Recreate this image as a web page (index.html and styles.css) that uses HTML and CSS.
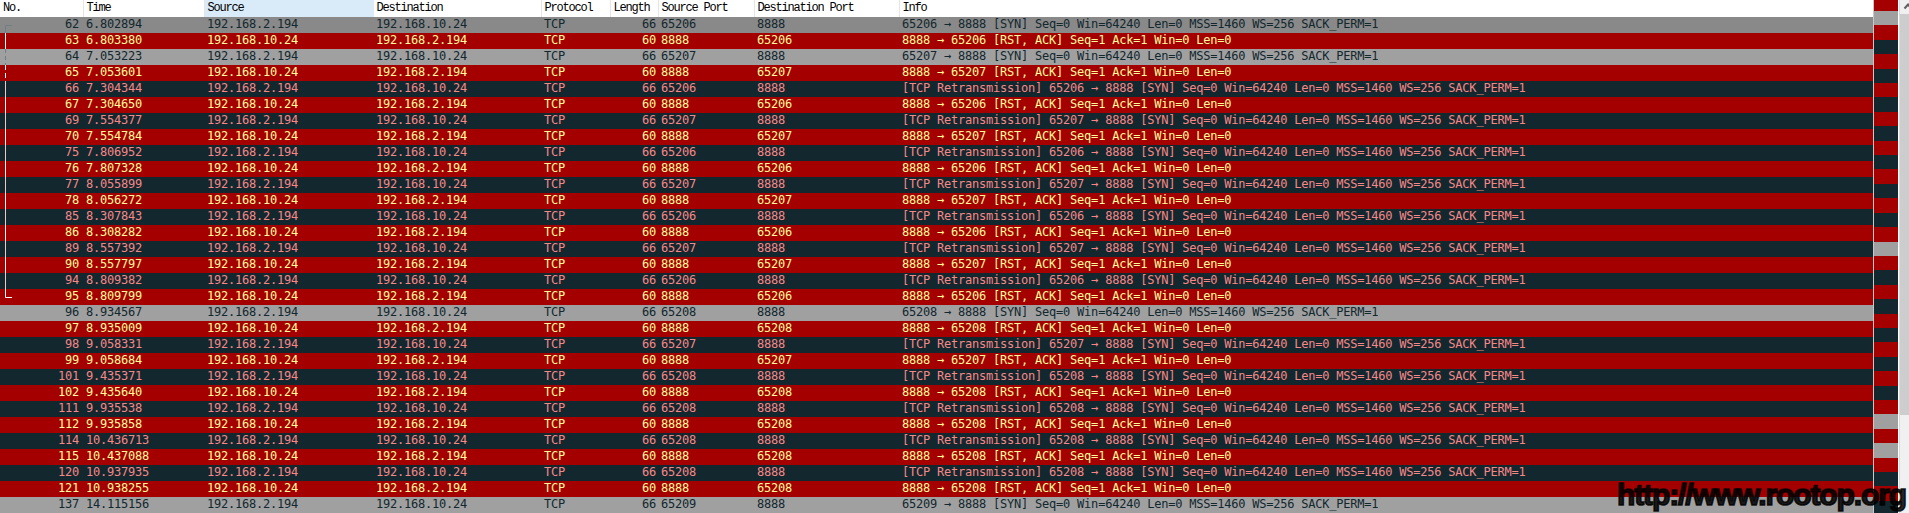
FILE: index.html
```html
<!DOCTYPE html>
<html lang="en">
<head>
<meta charset="utf-8">
<title>Packet list</title>
<link rel="stylesheet" href="styles.css">
</head>
<body>
<main class="window">
  <section class="list">
    <table class="packets">
      <colgroup>
        <col class="c-no"><col class="c-time"><col class="c-src"><col class="c-dst"><col class="c-proto"><col class="c-len"><col class="c-sport"><col class="c-dport"><col class="c-info">
      </colgroup>
      <thead>
        <tr>
          <th>No.</th><th>Time</th><th class="hover">Source</th><th>Destination</th><th>Protocol</th><th>Length</th><th>Source Port</th><th>Destination Port</th><th>Info</th>
        </tr>
      </thead>
      <tbody>
        <tr class="syn first"><td class="num">62</td><td>6.802894</td><td>192.168.2.194</td><td>192.168.10.24</td><td>TCP</td><td class="num">66</td><td>65206</td><td>8888</td><td>65206 → 8888 [SYN] Seq=0 Win=64240 Len=0 MSS=1460 WS=256 SACK_PERM=1</td></tr>
        <tr class="rst"><td class="num">63</td><td>6.803380</td><td>192.168.10.24</td><td>192.168.2.194</td><td>TCP</td><td class="num">60</td><td>8888</td><td>65206</td><td>8888 → 65206 [RST, ACK] Seq=1 Ack=1 Win=0 Len=0</td></tr>
        <tr class="syn"><td class="num">64</td><td>7.053223</td><td>192.168.2.194</td><td>192.168.10.24</td><td>TCP</td><td class="num">66</td><td>65207</td><td>8888</td><td>65207 → 8888 [SYN] Seq=0 Win=64240 Len=0 MSS=1460 WS=256 SACK_PERM=1</td></tr>
        <tr class="rst"><td class="num">65</td><td>7.053601</td><td>192.168.10.24</td><td>192.168.2.194</td><td>TCP</td><td class="num">60</td><td>8888</td><td>65207</td><td>8888 → 65207 [RST, ACK] Seq=1 Ack=1 Win=0 Len=0</td></tr>
        <tr class="bad"><td class="num">66</td><td>7.304344</td><td>192.168.2.194</td><td>192.168.10.24</td><td>TCP</td><td class="num">66</td><td>65206</td><td>8888</td><td>[TCP Retransmission] 65206 → 8888 [SYN] Seq=0 Win=64240 Len=0 MSS=1460 WS=256 SACK_PERM=1</td></tr>
        <tr class="rst"><td class="num">67</td><td>7.304650</td><td>192.168.10.24</td><td>192.168.2.194</td><td>TCP</td><td class="num">60</td><td>8888</td><td>65206</td><td>8888 → 65206 [RST, ACK] Seq=1 Ack=1 Win=0 Len=0</td></tr>
        <tr class="bad"><td class="num">69</td><td>7.554377</td><td>192.168.2.194</td><td>192.168.10.24</td><td>TCP</td><td class="num">66</td><td>65207</td><td>8888</td><td>[TCP Retransmission] 65207 → 8888 [SYN] Seq=0 Win=64240 Len=0 MSS=1460 WS=256 SACK_PERM=1</td></tr>
        <tr class="rst"><td class="num">70</td><td>7.554784</td><td>192.168.10.24</td><td>192.168.2.194</td><td>TCP</td><td class="num">60</td><td>8888</td><td>65207</td><td>8888 → 65207 [RST, ACK] Seq=1 Ack=1 Win=0 Len=0</td></tr>
        <tr class="bad"><td class="num">75</td><td>7.806952</td><td>192.168.2.194</td><td>192.168.10.24</td><td>TCP</td><td class="num">66</td><td>65206</td><td>8888</td><td>[TCP Retransmission] 65206 → 8888 [SYN] Seq=0 Win=64240 Len=0 MSS=1460 WS=256 SACK_PERM=1</td></tr>
        <tr class="rst"><td class="num">76</td><td>7.807328</td><td>192.168.10.24</td><td>192.168.2.194</td><td>TCP</td><td class="num">60</td><td>8888</td><td>65206</td><td>8888 → 65206 [RST, ACK] Seq=1 Ack=1 Win=0 Len=0</td></tr>
        <tr class="bad"><td class="num">77</td><td>8.055899</td><td>192.168.2.194</td><td>192.168.10.24</td><td>TCP</td><td class="num">66</td><td>65207</td><td>8888</td><td>[TCP Retransmission] 65207 → 8888 [SYN] Seq=0 Win=64240 Len=0 MSS=1460 WS=256 SACK_PERM=1</td></tr>
        <tr class="rst"><td class="num">78</td><td>8.056272</td><td>192.168.10.24</td><td>192.168.2.194</td><td>TCP</td><td class="num">60</td><td>8888</td><td>65207</td><td>8888 → 65207 [RST, ACK] Seq=1 Ack=1 Win=0 Len=0</td></tr>
        <tr class="bad"><td class="num">85</td><td>8.307843</td><td>192.168.2.194</td><td>192.168.10.24</td><td>TCP</td><td class="num">66</td><td>65206</td><td>8888</td><td>[TCP Retransmission] 65206 → 8888 [SYN] Seq=0 Win=64240 Len=0 MSS=1460 WS=256 SACK_PERM=1</td></tr>
        <tr class="rst"><td class="num">86</td><td>8.308282</td><td>192.168.10.24</td><td>192.168.2.194</td><td>TCP</td><td class="num">60</td><td>8888</td><td>65206</td><td>8888 → 65206 [RST, ACK] Seq=1 Ack=1 Win=0 Len=0</td></tr>
        <tr class="bad"><td class="num">89</td><td>8.557392</td><td>192.168.2.194</td><td>192.168.10.24</td><td>TCP</td><td class="num">66</td><td>65207</td><td>8888</td><td>[TCP Retransmission] 65207 → 8888 [SYN] Seq=0 Win=64240 Len=0 MSS=1460 WS=256 SACK_PERM=1</td></tr>
        <tr class="rst"><td class="num">90</td><td>8.557797</td><td>192.168.10.24</td><td>192.168.2.194</td><td>TCP</td><td class="num">60</td><td>8888</td><td>65207</td><td>8888 → 65207 [RST, ACK] Seq=1 Ack=1 Win=0 Len=0</td></tr>
        <tr class="bad"><td class="num">94</td><td>8.809382</td><td>192.168.2.194</td><td>192.168.10.24</td><td>TCP</td><td class="num">66</td><td>65206</td><td>8888</td><td>[TCP Retransmission] 65206 → 8888 [SYN] Seq=0 Win=64240 Len=0 MSS=1460 WS=256 SACK_PERM=1</td></tr>
        <tr class="rst"><td class="num">95</td><td>8.809799</td><td>192.168.10.24</td><td>192.168.2.194</td><td>TCP</td><td class="num">60</td><td>8888</td><td>65206</td><td>8888 → 65206 [RST, ACK] Seq=1 Ack=1 Win=0 Len=0</td></tr>
        <tr class="syn"><td class="num">96</td><td>8.934567</td><td>192.168.2.194</td><td>192.168.10.24</td><td>TCP</td><td class="num">66</td><td>65208</td><td>8888</td><td>65208 → 8888 [SYN] Seq=0 Win=64240 Len=0 MSS=1460 WS=256 SACK_PERM=1</td></tr>
        <tr class="rst"><td class="num">97</td><td>8.935009</td><td>192.168.10.24</td><td>192.168.2.194</td><td>TCP</td><td class="num">60</td><td>8888</td><td>65208</td><td>8888 → 65208 [RST, ACK] Seq=1 Ack=1 Win=0 Len=0</td></tr>
        <tr class="bad"><td class="num">98</td><td>9.058331</td><td>192.168.2.194</td><td>192.168.10.24</td><td>TCP</td><td class="num">66</td><td>65207</td><td>8888</td><td>[TCP Retransmission] 65207 → 8888 [SYN] Seq=0 Win=64240 Len=0 MSS=1460 WS=256 SACK_PERM=1</td></tr>
        <tr class="rst"><td class="num">99</td><td>9.058684</td><td>192.168.10.24</td><td>192.168.2.194</td><td>TCP</td><td class="num">60</td><td>8888</td><td>65207</td><td>8888 → 65207 [RST, ACK] Seq=1 Ack=1 Win=0 Len=0</td></tr>
        <tr class="bad"><td class="num">101</td><td>9.435371</td><td>192.168.2.194</td><td>192.168.10.24</td><td>TCP</td><td class="num">66</td><td>65208</td><td>8888</td><td>[TCP Retransmission] 65208 → 8888 [SYN] Seq=0 Win=64240 Len=0 MSS=1460 WS=256 SACK_PERM=1</td></tr>
        <tr class="rst"><td class="num">102</td><td>9.435640</td><td>192.168.10.24</td><td>192.168.2.194</td><td>TCP</td><td class="num">60</td><td>8888</td><td>65208</td><td>8888 → 65208 [RST, ACK] Seq=1 Ack=1 Win=0 Len=0</td></tr>
        <tr class="bad"><td class="num">111</td><td>9.935538</td><td>192.168.2.194</td><td>192.168.10.24</td><td>TCP</td><td class="num">66</td><td>65208</td><td>8888</td><td>[TCP Retransmission] 65208 → 8888 [SYN] Seq=0 Win=64240 Len=0 MSS=1460 WS=256 SACK_PERM=1</td></tr>
        <tr class="rst"><td class="num">112</td><td>9.935858</td><td>192.168.10.24</td><td>192.168.2.194</td><td>TCP</td><td class="num">60</td><td>8888</td><td>65208</td><td>8888 → 65208 [RST, ACK] Seq=1 Ack=1 Win=0 Len=0</td></tr>
        <tr class="bad"><td class="num">114</td><td>10.436713</td><td>192.168.2.194</td><td>192.168.10.24</td><td>TCP</td><td class="num">66</td><td>65208</td><td>8888</td><td>[TCP Retransmission] 65208 → 8888 [SYN] Seq=0 Win=64240 Len=0 MSS=1460 WS=256 SACK_PERM=1</td></tr>
        <tr class="rst"><td class="num">115</td><td>10.437088</td><td>192.168.10.24</td><td>192.168.2.194</td><td>TCP</td><td class="num">60</td><td>8888</td><td>65208</td><td>8888 → 65208 [RST, ACK] Seq=1 Ack=1 Win=0 Len=0</td></tr>
        <tr class="bad"><td class="num">120</td><td>10.937935</td><td>192.168.2.194</td><td>192.168.10.24</td><td>TCP</td><td class="num">66</td><td>65208</td><td>8888</td><td>[TCP Retransmission] 65208 → 8888 [SYN] Seq=0 Win=64240 Len=0 MSS=1460 WS=256 SACK_PERM=1</td></tr>
        <tr class="rst"><td class="num">121</td><td>10.938255</td><td>192.168.10.24</td><td>192.168.2.194</td><td>TCP</td><td class="num">60</td><td>8888</td><td>65208</td><td>8888 → 65208 [RST, ACK] Seq=1 Ack=1 Win=0 Len=0</td></tr>
        <tr class="syn"><td class="num">137</td><td>14.115156</td><td>192.168.2.194</td><td>192.168.10.24</td><td>TCP</td><td class="num">66</td><td>65209</td><td>8888</td><td>65209 → 8888 [SYN] Seq=0 Win=64240 Len=0 MSS=1460 WS=256 SACK_PERM=1</td></tr>
      </tbody>
    </table>
    <svg class="bracket" width="14" height="300" viewBox="0 0 14 300" aria-hidden="true">
      <path class="br-gray" d="M12 25.5H5.5V33"/>
      <path class="br-gray-dash" d="M5.5 49V65"/>
      <path class="br-white-dash" d="M5.5 65V81"/>
      <path class="br-pink" d="M5.5 81V97M5.5 113V129M5.5 145V161M5.5 177V193M5.5 209V225M5.5 241V257M5.5 273V289"/>
      <path class="br-white" d="M5.5 33V49M5.5 97V113M5.5 129V145M5.5 161V177M5.5 193V209M5.5 225V241M5.5 257V273M5.5 289V297.5H12"/>
    </svg>
  </section>
  <aside class="minimap" aria-hidden="true">
    <div class="band head r"></div>
    <div class="band g"></div><div class="band r"></div><div class="band d"></div><div class="band r"></div><div class="band d"></div><div class="band r"></div><div class="band d"></div><div class="band r"></div><div class="band d"></div><div class="band r"></div><div class="band d"></div><div class="band r"></div><div class="band d"></div><div class="band r"></div><div class="band d"></div><div class="band r"></div>
    <div class="band g"></div><div class="band r"></div><div class="band d"></div><div class="band r"></div><div class="band d"></div><div class="band r"></div><div class="band d"></div><div class="band r"></div><div class="band d"></div><div class="band r"></div><div class="band d"></div><div class="band r"></div>
    <div class="band g"></div><div class="band r"></div><div class="band g"></div><div class="band r"></div><div class="band d"></div><div class="band r"></div><div class="band d tail"></div>
  </aside>
  <div class="scrollbar" aria-hidden="true">
    <div class="arrow"><svg width="9" height="14" viewBox="0 0 9 14"><path d="M4.5 8.5L8 4.5L11.5 8.5" /></svg></div>
    <div class="thumb"></div>
  </div>
  <div class="watermark">http://www.rootop.org</div>
</main>
</body>
</html>
```
FILE: styles.css
```css
* { box-sizing: border-box; }
html, body { margin: 0; height: 100%; background: #fff; overflow: hidden; }

.window {
  position: relative;
  display: flex;
  width: 1909px;
  height: 513px;
  overflow: hidden;
}

.list {
  position: relative;
  flex: 0 0 1873px;
  overflow: hidden;
}

.packets {
  width: 1873px;
  table-layout: fixed;
  border-collapse: collapse;
  border-spacing: 0;
}
.c-no { width: 83px; }
.c-time { width: 121px; }
.c-src { width: 169px; }
.c-dst { width: 168px; }
.c-proto { width: 69px; }
.c-len { width: 48px; }
.c-sport { width: 96px; }
.c-dport { width: 145px; }
.c-info { width: 974px; }

.packets th {
  height: 17px;
  padding: 0 0 1px 3px;
  border-right: 1px solid #e5e5e5;
  background: #fff;
  color: #000;
  font: normal 12px/16px "Liberation Mono", monospace;
  letter-spacing: -1.2px;
  text-align: left;
  white-space: nowrap;
}
.packets th:last-child { border-right: 0; }
.packets th.hover { background: #d9ebf9; border-right-color: #d9ebf9; }

.packets td {
  height: 16px;
  padding: 0 3px 1px;
  overflow: hidden;
  font: 12px/15px "DejaVu Sans Mono", monospace;
  letter-spacing: -0.22px;
  white-space: nowrap;
}
.packets td.num { text-align: right; padding-right: 2px; }
.packets td.num:first-child { padding-right: 4px; }

.syn { background: #a0a0a0; color: #12272e; }
.syn.first { background: #898989; }
.rst { background: #a40000; color: #fffc9c; }
.bad { background: #12272e; color: #f78787; }

.bracket {
  position: absolute;
  left: 0;
  top: 0;
  fill: none;
}
.br-white { stroke: #fff; stroke-width: 1; }
.br-pink { stroke: #eec8c8; stroke-width: 1; }
.br-gray { stroke: #6f7f86; stroke-width: 1; }
.br-gray-dash { stroke: #6f7f86; stroke-width: 1; stroke-dasharray: 4 3; }
.br-white-dash { stroke: #fff; stroke-width: 1; stroke-dasharray: 5 3; }

.minimap {
  display: flex;
  flex-direction: column;
  flex: 0 0 27px;
  padding: 0 1px 0 0;
  border-left: 1px solid #c8c8c8;
  border-right: 1px solid #dcdcdc;
  background: #fff;
}
.band { flex: 1 1 0; min-height: 0; }
.band.head { flex: 0 0 11px; }
.band.tail { flex: 0 0 12px; }
.band.r { background: #a40000; }
.band.g { background: #a0a0a0; }
.band.d { background: #12272e; }

.scrollbar {
  flex: 0 0 9px;
  display: flex;
  flex-direction: column;
  background: #f0f0f0;
}
.arrow { height: 14px; background: #f0f0f0; }
.arrow svg { display: block; fill: none; stroke: #606060; stroke-width: 2; }
.thumb { height: 401px; background: #cdcdcd; }

.watermark {
  position: absolute;
  left: 1617px;
  top: 477px;
  color: rgba(0, 0, 0, 0.86);
  font: bold 30px/36px "Liberation Sans", sans-serif;
  letter-spacing: -1.1px;
  -webkit-text-stroke: 1.6px rgba(0, 0, 0, 0.86);
  white-space: nowrap;
}
```
